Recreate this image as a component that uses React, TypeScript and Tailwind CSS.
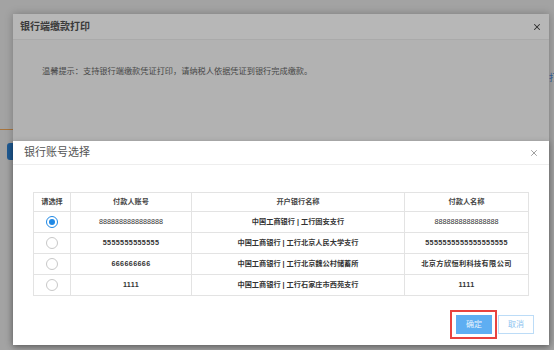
import { X } from "lucide-react";

const font = { fontFamily: '"Liberation Sans", "Noto Sans CJK SC", sans-serif' };

interface Account {
  account: string;
  bank: string;
  payer: string;
}

const accounts: Account[] = [
  { account: "8888888888888888", bank: "中国工商银行 | 工行固安支行", payer: "8888888888888888" },
  { account: "5555555555555", bank: "中国工商银行 | 工行北京人民大学支行", payer: "5555555555555555555" },
  { account: "666666666", bank: "中国工商银行 | 工行北京魏公村储蓄所", payer: "北京方欣恒利科技有限公司" },
  { account: "1111", bank: "中国工商银行 | 工行石家庄市西苑支行", payer: "1111" },
];

function Radio({ checked }: { checked: boolean }) {
  return checked ? (
    <span className="mx-auto flex h-[12px] w-[12px] items-center justify-center rounded-full border-[1.5px] border-[#1e88e5]">
      <span className="h-[6px] w-[6px] rounded-full bg-[#1e88e5]" />
    </span>
  ) : (
    <span className="mx-auto block h-[12px] w-[12px] rounded-full border border-[#c8c8c8]" />
  );
}

export default function App() {
  return (
    <div className="relative h-[350px] w-[554px] overflow-hidden bg-[#a3a3a3]" style={font}>
      {/* page behind the dialogs */}
      <div className="absolute left-0 top-[129px] h-[1px] w-[13px] bg-[#a8743c]" />
      <div className="absolute left-[7px] top-[143px] h-[17px] w-[12px] rounded-[3px] bg-[#1f5b94]" />
      <div className="absolute left-[549px] top-[73px] text-[9px] leading-[10px] text-[#34609a]">打</div>

      {/* outer dialog (dimmed) */}
      <div className="absolute left-[13px] top-[14px] h-[331px] w-[536px] bg-[#b2b2b2] shadow-[0_0_8px_rgba(0,0,0,0.25)]">
        <div className="flex h-[26px] items-center justify-between border-b border-[#aaaaaa] bg-[#b7b7b7] pl-[7px] pr-[7px]">
          <span className="text-[10px] font-bold text-[#3a3a3a]">银行端缴款打印</span>
          <X size={10} strokeWidth={2.5} className="text-[#2e2e2e]" />
        </div>
        <p className="pl-[29px] pt-[26px] text-[8.2px] text-[#474747]">
          温馨提示：支持银行端缴款凭证打印，请纳税人依据凭证到银行完成缴款。
        </p>
      </div>

      {/* inner dialog */}
      <div className="absolute left-[13px] top-[141px] w-[536px] bg-white shadow-[0_2px_6px_rgba(0,0,0,0.3)]">
        <div className="flex h-[24px] items-center justify-between border-b border-[#eeeeee] pl-[11px] pr-[10px]">
          <span className="text-[11px] text-[#555555]">银行账号选择</span>
          <X size={10} strokeWidth={1.5} className="text-[#666666]" />
        </div>

        <div className="px-[20px] pt-[27px]">
          <table className="w-[495px] table-fixed border-collapse text-[7.2px] text-[#333333]">
            <colgroup>
              <col className="w-[37px]" />
              <col className="w-[121px]" />
              <col className="w-[213px]" />
              <col className="w-[124px]" />
            </colgroup>
            <thead>
              <tr className="h-[19px] font-semibold text-[#444444]">
                <th className="border border-[#e3e3e3] p-0">请选择</th>
                <th className="border border-[#e3e3e3] p-0">付款人账号</th>
                <th className="border border-[#e3e3e3] p-0">开户银行名称</th>
                <th className="border border-[#e3e3e3] p-0">付款人名称</th>
              </tr>
            </thead>
            <tbody>
              {accounts.map((a, i) => {
                const first = i === 0;
                return (
                  <tr key={a.account} className="h-[21px] text-center">
                    <td className="border border-[#e3e3e3] p-0">
                      <Radio checked={first} />
                    </td>
                    <td
                      className={`border border-[#e3e3e3] p-0 ${
                        first ? "font-normal" : "font-bold tracking-[0.35px]"
                      }`}
                    >
                      {a.account}
                    </td>
                    <td className="border border-[#e3e3e3] p-0 font-semibold">{a.bank}</td>
                    <td
                      className={`border border-[#e3e3e3] p-0 ${
                        first ? "font-normal" : "font-bold tracking-[0.35px]"
                      }`}
                    >
                      {a.payer}
                    </td>
                  </tr>
                );
              })}
            </tbody>
          </table>
        </div>

        <div className="flex items-center justify-end pb-[6px] pr-[15px] pt-[14px]">
          <div className="border-2 border-[#e8423f] pb-[3px] pl-[4px] pr-[3px] pt-[3px]">
            <button className="flex h-[19px] w-[36px] items-center justify-center bg-[#5eaef2] text-[8px] text-[#eaf4fd]">
              确定
            </button>
          </div>
          <button className="ml-[1px] flex h-[19px] w-[36px] items-center justify-center border border-[#bcdcf7] bg-white text-[8px] text-[#8ec3ef]">
            取消
          </button>
        </div>
      </div>
    </div>
  );
}
